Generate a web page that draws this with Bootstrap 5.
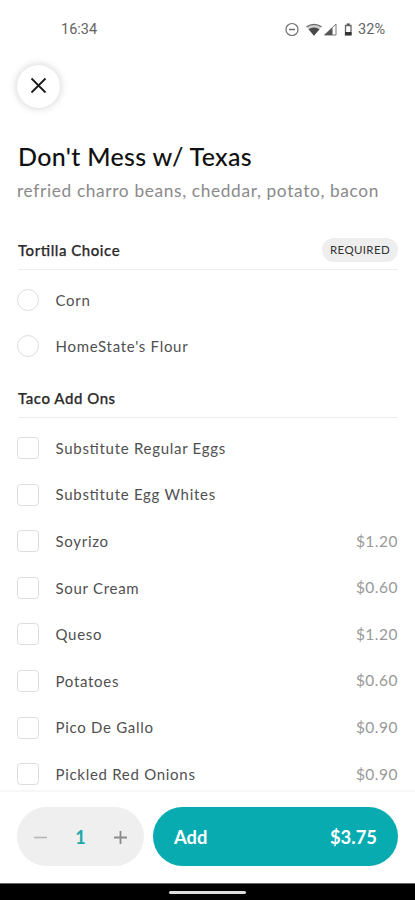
<!DOCTYPE html>
<html lang="en">
<head>
<meta charset="utf-8">
<meta name="viewport" content="width=device-width, initial-scale=1">
<title>Don't Mess w/ Texas</title>
<link href="https://cdn.jsdelivr.net/npm/bootstrap@5.3.0/dist/css/bootstrap.min.css" rel="stylesheet">
<style>
body{font-family:Lato,"Liberation Sans",sans-serif;height:900px;overflow:hidden;color:#505050;background:#fff;font-feature-settings:"liga" 1}
.status{height:60px;padding:0 30px 0 61px;font-family:Roboto,sans-serif;font-size:14.5px;line-height:60px;color:#636363}
.close-btn{width:43px;height:43px;margin:4.5px 0 0 17px;box-shadow:0 0 9px rgba(0,0,0,.2)}
.item-title{font-size:25px;line-height:32px;letter-spacing:.33px;color:#111;margin:32px 0 0}
.item-desc{font-size:17.3px;line-height:24px;letter-spacing:.65px;color:#8a8a8a;margin:7px 0 0 -1px}
.content-area{padding:0 17px 0 18px}
.group-head{height:39px;border-bottom:1px solid #ededed;color:#2a2a2a}
.group-head h2{font-size:15px;line-height:20px;font-weight:500;letter-spacing:.55px;-webkit-text-stroke:.25px #2a2a2a}
.req{font-size:11.5px;line-height:24px;height:24px;padding:0 8px;background:#eee;color:#333;letter-spacing:.35px}
.opts{padding-top:7px}
.tortilla{margin-top:28px}
.addons{margin-top:9px}
.opt{height:46.6px;font-size:15px;letter-spacing:.71px}
.opt .form-check-input{width:22px;height:22px;border:1px solid #dedede;margin:0 16.500px 0 -1px;float:none}
.opt .form-check-input[type=checkbox]{border-radius:4px}
.price{color:#999;font-size:15.5px;letter-spacing:.5px}
.buy{height:93px;border-top:2px solid #f7f7f7;padding:15px 17px 0 17px;background:#fff}
.qty{width:127px;height:59px;background:#efefef;padding:2px 16px 0}
.qty span{font-size:18px;color:#20a7aa}
.add-btn,.add-btn:hover{width:245px;height:59px;background:#07abb0;color:#fff;font-size:18.4px;font-weight:700;padding:2px 21px 0}
.sysnav{height:17px;background:#000;border-top:1px solid #666}
.sysnav div{width:77px;height:3px;background:#ddd;margin-top:1px}
</style>
<script src="https://cdn.jsdelivr.net/npm/bootstrap@5.3.0/dist/js/bootstrap.bundle.min.js"></script>
</head>
<body class="d-flex flex-column">
<header>
<div class="status d-flex justify-content-between align-items-center">
<span>16:34</span>
<span class="d-flex align-items-center">
<svg width="72" height="18" viewBox="0 0 72 18" fill="none" class="me-1">
<circle cx="10" cy="8.500" r="6" stroke="#707070" stroke-width="1.200"/><path d="M7 8.500h6" stroke="#666" stroke-width="1.400"/>
<path d="M24.500 5.800Q32 .8 39.500 5.800L32 14.800Z" fill="#ccc"/><path d="M24.500 5.800Q32 .8 39.500 5.800" stroke="#666" stroke-width="1.300"/><path d="M26.500 8.200Q32 5 37.500 8.200L32 14.800Z" fill="#484848"/>
<path d="M42.500 14L54 3V14Z" stroke="#777"/><path d="M42.500 14L50.500 6.500V14Z" fill="#555"/>
<path d="M63.500 4.500H69V14H63.500Z" stroke="#666" stroke-width="1.300"/><path d="M64.800 3.300h3" stroke="#555" stroke-width="1.800"/><path d="M63 12.500h6.500" stroke="#333" stroke-width="3"/>
</svg>32%</span>
</div>
<button class="close-btn btn bg-white rounded-circle border-0 p-0 d-flex align-items-center justify-content-center" aria-label="Close">
<svg width="18" height="18" viewBox="0 0 18 18"><path d="M1.500 1.500L15.500 15.500M15.500 1.500L1.500 15.500" stroke="#1c1c1c" stroke-width="1.800"/></svg>
</button>
</header>
<main class="content-area flex-grow-1 overflow-hidden">
<h1 class="item-title">Don't Mess w/ Texas</h1>
<p class="item-desc text-nowrap">refried charro beans, cheddar, potato, bacon</p>
<section class="tortilla">
<div class="group-head d-flex justify-content-between align-items-center"><h2 class="m-0">Tortilla Choice</h2><span class="req rounded-pill">REQUIRED</span></div>
<div class="opts">
<label class="opt d-flex align-items-center"><input class="form-check-input" type="radio" name="tortilla"><span>Corn</span></label>
<label class="opt d-flex align-items-center"><input class="form-check-input" type="radio" name="tortilla"><span>HomeState's Flour</span></label>
</div>
</section>
<section class="addons">
<div class="group-head d-flex align-items-center"><h2 class="m-0">Taco Add Ons</h2></div>
<div class="opts">
<label class="opt d-flex align-items-center"><input class="form-check-input" type="checkbox"><span>Substitute Regular Eggs</span></label>
<label class="opt d-flex align-items-center"><input class="form-check-input" type="checkbox"><span>Substitute Egg Whites</span></label>
<label class="opt d-flex align-items-center"><input class="form-check-input" type="checkbox"><span>Soyrizo</span><span class="price ms-auto">$1.20</span></label>
<label class="opt d-flex align-items-center"><input class="form-check-input" type="checkbox"><span>Sour Cream</span><span class="price ms-auto">$0.60</span></label>
<label class="opt d-flex align-items-center"><input class="form-check-input" type="checkbox"><span>Queso</span><span class="price ms-auto">$1.20</span></label>
<label class="opt d-flex align-items-center"><input class="form-check-input" type="checkbox"><span>Potatoes</span><span class="price ms-auto">$0.60</span></label>
<label class="opt d-flex align-items-center"><input class="form-check-input" type="checkbox"><span>Pico De Gallo</span><span class="price ms-auto">$0.90</span></label>
<label class="opt d-flex align-items-center"><input class="form-check-input" type="checkbox"><span>Pickled Red Onions</span><span class="price ms-auto">$0.90</span></label>
</div>
</section>
</main>
<footer class="flex-shrink-0">
<div class="buy d-flex justify-content-between">
<div class="qty rounded-pill d-flex align-items-center justify-content-between">
<svg width="15" height="15" viewBox="0 0 15 15"><path d="M1 7.500H14" stroke="#b5b5b5" stroke-width="1.600"/></svg>
<span class="fw-bold">1</span>
<svg width="15" height="15" viewBox="0 0 15 15"><path d="M1 7.500H14M7.500 1V14" stroke="#8b8b8b" stroke-width="1.800"/></svg>
</div>
<button class="add-btn btn rounded-pill border-0 d-flex align-items-center justify-content-between"><span>Add</span><span>$3.75</span></button>
</div>
<div class="sysnav d-flex align-items-center justify-content-center"><div class="rounded-pill"></div></div>
</footer>
</body>
</html>
